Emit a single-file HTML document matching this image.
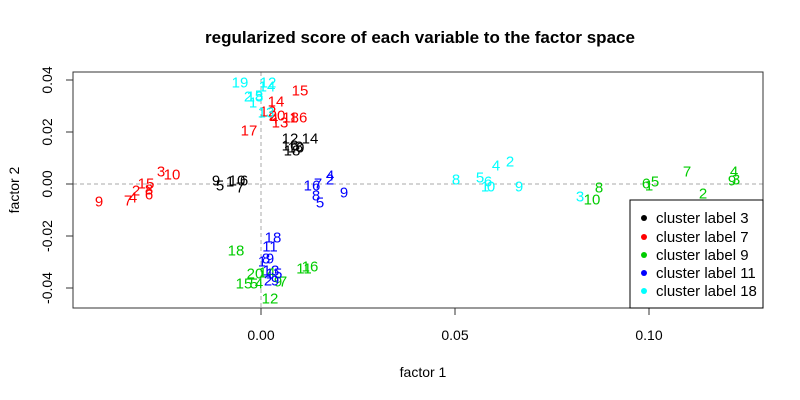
<!DOCTYPE html>
<html><head><meta charset="utf-8"><style>
body{margin:0;background:#fff}
svg{display:block;font-family:"Liberation Sans",sans-serif}
</style></head><body>
<svg width="800" height="400" xmlns="http://www.w3.org/2000/svg">
<rect width="800" height="400" fill="#fff"/>
<text x="420" y="43" font-size="17" font-weight="bold" text-anchor="middle">regularized score of each variable to the factor space</text>
<line x1="73" y1="184" x2="763" y2="184" stroke="#aaa" stroke-dasharray="4,3"/>
<line x1="261" y1="72" x2="261" y2="308" stroke="#aaa" stroke-dasharray="4,3"/>
<rect x="73" y="72" width="690" height="236" fill="none" stroke="#333"/>
<g stroke="#333">
<line x1="261" y1="308" x2="261" y2="315"/><line x1="455" y1="308" x2="455" y2="315"/><line x1="649" y1="308" x2="649" y2="315"/>
<line x1="66" y1="80" x2="73" y2="80"/><line x1="66" y1="132" x2="73" y2="132"/><line x1="66" y1="184" x2="73" y2="184"/><line x1="66" y1="236" x2="73" y2="236"/><line x1="66" y1="288" x2="73" y2="288"/>
</g>
<g font-size="14" text-anchor="middle" fill="#000">
<text x="261" y="340">0.00</text><text x="455" y="340">0.05</text><text x="649" y="340">0.10</text>
<text x="423" y="377">factor 1</text>
<text transform="translate(52,80) rotate(-90)">0.04</text>
<text transform="translate(52,132) rotate(-90)">0.02</text>
<text transform="translate(52,184) rotate(-90)">0.00</text>
<text transform="translate(52,236) rotate(-90)">-0.02</text>
<text transform="translate(52,288) rotate(-90)">-0.04</text>
<text transform="translate(19,190) rotate(-90)">factor 2</text>
</g>
<g font-size="15" text-anchor="middle" dominant-baseline="central">
<g fill="#f00">
<text x="99" y="202">9</text><text x="128" y="201">7</text><text x="133" y="198">4</text><text x="136" y="191">2</text><text x="146" y="184">15</text><text x="149" y="190">8</text><text x="149" y="195">6</text><text x="161" y="172">3</text><text x="172" y="175">10</text><text x="249" y="131">17</text><text x="300" y="91">15</text><text x="276" y="102">14</text><text x="268" y="112">12</text><text x="277" y="116">20</text><text x="274" y="119">4</text><text x="280" y="123">13</text><text x="290" y="118">11</text><text x="299" y="118">86</text>
</g>
<g fill="#000">
<text x="290" y="139">12</text><text x="310" y="139">14</text><text x="290" y="146">16</text><text x="296" y="148">10</text><text x="292" y="151">18</text><text x="299" y="147">3</text>
<text x="216" y="181">9</text><text x="220" y="186">5</text><text x="230" y="182">1</text><text x="237" y="181">10</text><text x="244" y="181">6</text><text x="240" y="188">7</text>
</g>
<g fill="#0ff">
<text x="240" y="83">19</text><text x="268" y="83">12</text><text x="267" y="87">14</text><text x="248" y="97">2</text><text x="255" y="97">18</text><text x="259" y="96">5</text><text x="253" y="103">1</text><text x="266" y="113">13</text>
<text x="456" y="180">8</text><text x="480" y="178">5</text><text x="488" y="182">6</text><text x="485" y="187">1</text><text x="491" y="187">0</text><text x="496" y="166">4</text><text x="510" y="162">2</text><text x="519" y="187">9</text><text x="580" y="197">3</text>
</g>
<g fill="#0c0">
<text x="687" y="172">7</text><text x="734" y="172">4</text><text x="732" y="181">9</text><text x="736" y="180">3</text><text x="646" y="184">6</text><text x="649" y="186">1</text><text x="655" y="182">5</text><text x="703" y="194">2</text><text x="599" y="188">8</text><text x="592" y="200">10</text>
<text x="236" y="251">18</text><text x="304" y="269">11</text><text x="310" y="267">16</text><text x="255" y="274">20</text><text x="267" y="273">14</text><text x="244" y="284">15</text><text x="254" y="284">5</text><text x="259" y="284">4</text><text x="283" y="282">7</text><text x="278" y="282">9</text><text x="270" y="299">12</text>
</g>
<g fill="#00f">
<text x="273" y="238">18</text><text x="270" y="247">11</text><text x="266" y="259">8</text><text x="270" y="259">9</text><text x="262" y="262">1</text><text x="271" y="271">13</text><text x="274" y="274">15</text><text x="268" y="281">2</text><text x="275" y="281">9</text>
<text x="312" y="186">16</text><text x="318" y="184">7</text><text x="330" y="176">4</text><text x="330" y="180">2</text><text x="316" y="196">8</text><text x="320" y="203">5</text><text x="344" y="193">9</text>
</g>
</g>
<rect x="630" y="200" width="133" height="108" fill="#fff" stroke="#000"/>
<g font-size="15">
<circle cx="644" cy="218" r="3" fill="#000"/><text x="656" y="223">cluster label 3</text>
<circle cx="644" cy="237" r="3" fill="#f00"/><text x="656" y="242">cluster label 7</text>
<circle cx="644" cy="255" r="3" fill="#0c0"/><text x="656" y="260">cluster label 9</text>
<circle cx="644" cy="273" r="3" fill="#00f"/><text x="656" y="278">cluster label 11</text>
<circle cx="644" cy="291" r="3" fill="#0ff"/><text x="656" y="296">cluster label 18</text>
</g>
</svg>
</body></html>
